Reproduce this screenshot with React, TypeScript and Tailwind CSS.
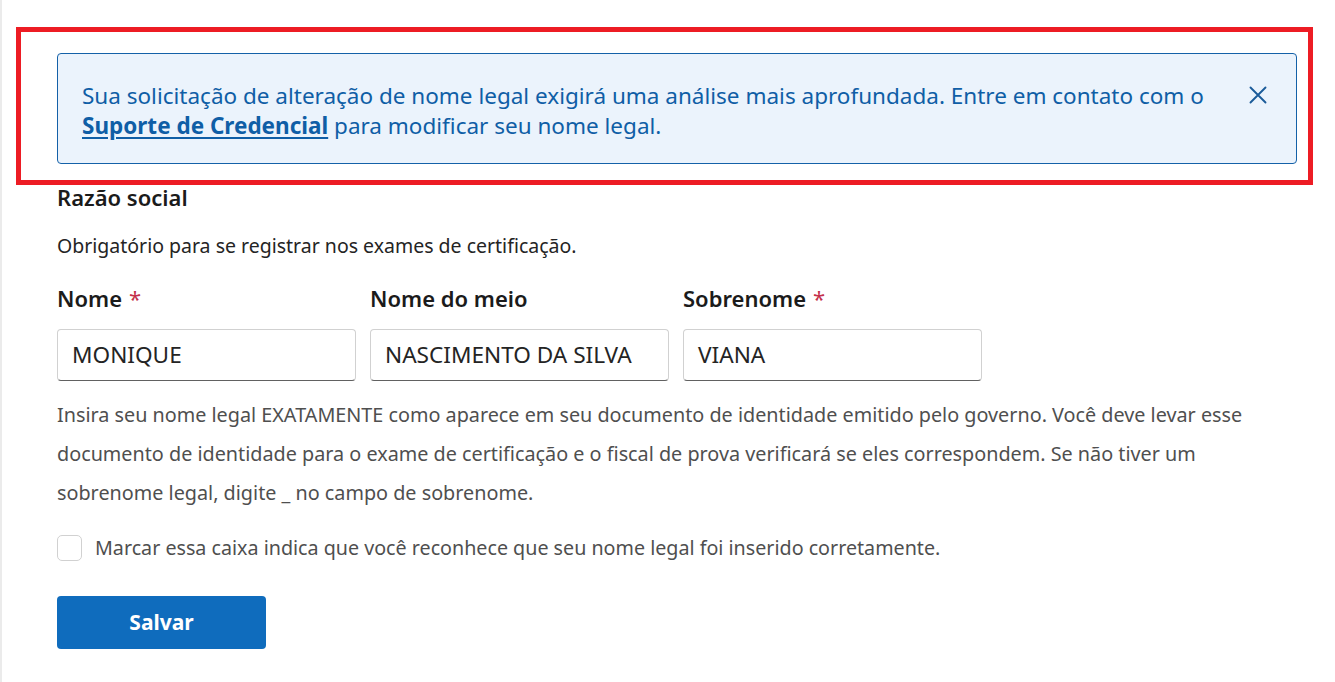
import React from "react";

const font = { fontFamily: '"Noto Sans", "Open Sans", sans-serif' };

function CloseIcon() {
  return (
    <svg width="20" height="20" viewBox="0 0 20 20" fill="none" stroke="currentColor" strokeWidth="1.9" strokeLinecap="round">
      <path d="M2.5 2.5 L17.5 17.5 M17.5 2.5 L2.5 17.5" />
    </svg>
  );
}

function Field({ label, value, required }: { label: string; value: string; required?: boolean }) {
  return (
    <div className="flex w-[299px] flex-col">
      <label className="h-[28px] text-[22px] font-semibold leading-[28px] text-[#1b1b1b]">
        {label}
        {required && <span className="ml-[7px] font-normal text-[#c4314b]">*</span>}
      </label>
      <div className="mt-[17px] flex h-[52px] items-center rounded-[4px] border border-[#d1d1d1] border-b-[#616161] bg-white px-[14px]">
        <span className="text-[22.6px] text-[#242424]">{value}</span>
      </div>
    </div>
  );
}

export default function App() {
  return (
    <div className="relative min-h-screen bg-white border-l-2 border-[#ebebeb]" style={font}>
      <div className="pl-[55px] pr-[38px] pt-[53px]">
        <div className="flex h-[111px] items-start rounded-[4px] border border-[#1461a8] bg-[#ebf3fc] pl-[24px] pr-[28px] pt-[27px]">
          <p className="flex-1 pr-[30px] text-[22.5px] leading-[30px] text-[#0f5ea6]">
            Sua solicitação de alteração de nome legal exigirá uma análise mais aprofundada. Entre em contato com o{" "}
            <a className="font-bold underline underline-offset-[3px]">Suporte de Credencial</a> para modificar seu nome legal.
          </p>
          <button className="mt-[4px] text-[#1b5b99]">
            <CloseIcon />
          </button>
        </div>

        <h2 className="mt-[19px] text-[22px] font-semibold leading-[28px] text-[#1b1b1b]">Razão social</h2>
        <p className="mt-[22px] text-[19.5px] leading-[26px] text-[#242424]">
          Obrigatório para se registrar nos exames de certificação.
        </p>

        <div className="mt-[25px] flex gap-[14px]">
          <Field label="Nome" value="MONIQUE" required />
          <Field label="Nome do meio" value="NASCIMENTO DA SILVA" />
          <Field label="Sobrenome" value="VIANA" required />
        </div>

        <p className="mt-[14px] text-[19.8px] leading-[39px] text-[#4f4f4f]">
          Insira seu nome legal EXATAMENTE como aparece em seu documento de identidade emitido pelo governo. Você deve levar esse documento de identidade para o exame de certificação e o fiscal de prova verificará se eles correspondem. Se não tiver um sobrenome legal, digite _ no campo de sobrenome.
        </p>

        <label className="mt-[23px] flex items-center gap-[13px]">
          <span className="h-[26px] w-[25px] shrink-0 rounded-[5px] border border-[#d1d1d1] bg-white" />
          <span className="text-[19.7px] leading-[26px] text-[#4f4f4f]">
            Marcar essa caixa indica que você reconhece que seu nome legal foi inserido corretamente.
          </span>
        </label>

        <button className="mt-[35px] flex h-[53px] w-[209px] items-center justify-center rounded-[4px] bg-[#0f6cbd] text-[21px] font-bold text-white">
          Salvar
        </button>
      </div>

      <div className="pointer-events-none absolute left-[14px] top-[27px] h-[158px] w-[1297px] border-[5px] border-[#ed1c24]" />
    </div>
  );
}
